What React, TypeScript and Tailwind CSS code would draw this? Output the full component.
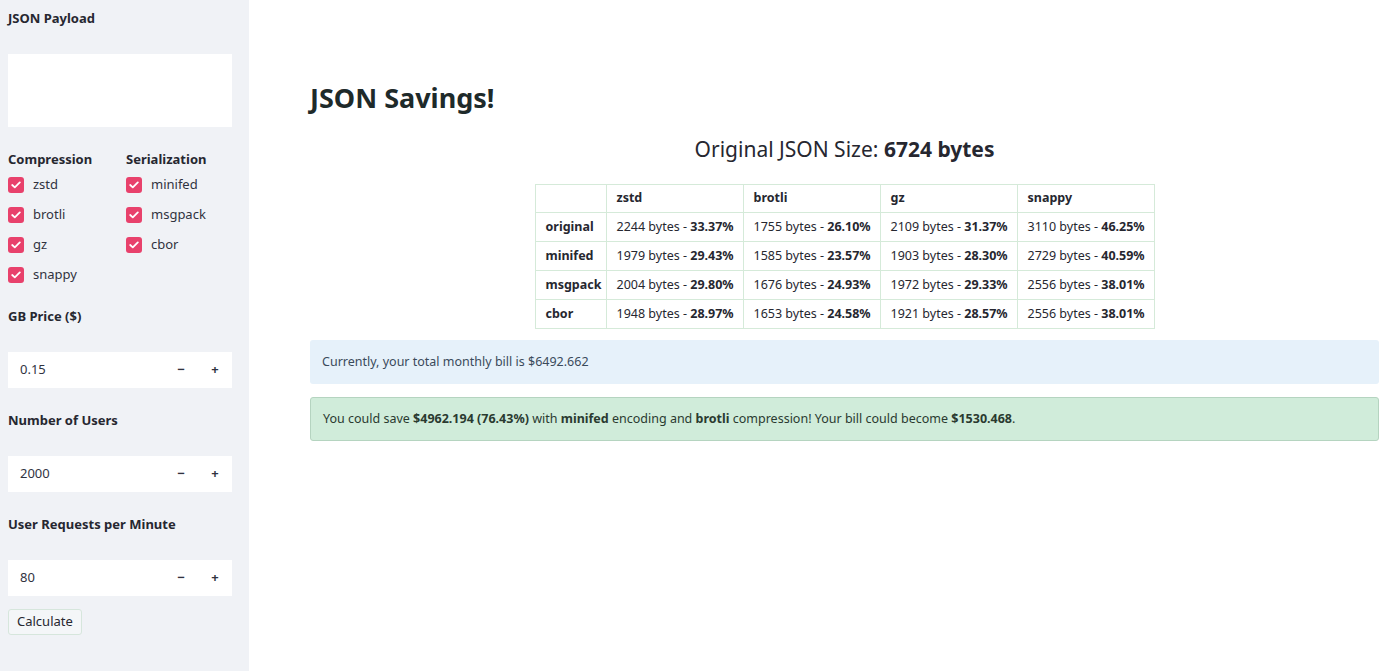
import React from "react";

const font = { fontFamily: '"Noto Sans", "Open Sans", sans-serif' };

function Check({ label }: { label: string }) {
  return (
    <div className="flex items-center h-[30px]">
      <div className="w-4 h-4 rounded-[3px] bg-[#e8416c] flex items-center justify-center mr-[9px]">
        <svg width="10" height="8" viewBox="0 0 10 8" fill="none">
          <path d="M1.2 4 L3.8 6.4 L8.8 1.4" stroke="white" strokeWidth="1.8" strokeLinecap="round" strokeLinejoin="round" />
        </svg>
      </div>
      <span className="text-[13px] text-[#31333f]">{label}</span>
    </div>
  );
}

function NumInput({ value }: { value: string }) {
  return (
    <div className="ml-2 w-[224px] h-9 bg-white flex items-center text-[13px] text-[#31333f]">
      <span className="pl-3 flex-1">{value}</span>
      <span className="w-[34px] text-center font-bold">−</span>
      <span className="w-[34px] text-center font-bold">+</span>
    </div>
  );
}

const rows: [string, string[][]][] = [
  ["original", [["2244", "33.37%"], ["1755", "26.10%"], ["2109", "31.37%"], ["3110", "46.25%"]]],
  ["minifed", [["1979", "29.43%"], ["1585", "23.57%"], ["1903", "28.30%"], ["2729", "40.59%"]]],
  ["msgpack", [["2004", "29.80%"], ["1676", "24.93%"], ["1972", "29.33%"], ["2556", "38.01%"]]],
  ["cbor", [["1948", "28.97%"], ["1653", "24.58%"], ["1921", "28.57%"], ["2556", "38.01%"]]],
];

export default function App() {
  return (
    <div className="flex w-[1400px] h-[671px] bg-white text-[#262730]" style={font}>
      <aside className="w-[249px] shrink-0 bg-[#f0f2f6] flex flex-col">
        <div className="px-2 pt-[8px] text-[13px] font-bold h-[20px] leading-[20px] mt-[0px]">JSON Payload</div>
        <div className="ml-2 w-[224px] mt-[34px] h-[73px] bg-white" />
        <div className="flex px-2 mt-[22px]">
          <div className="w-[118px]">
            <div className="text-[13px] font-bold h-[20px] leading-[20px] mb-[1px]">Compression</div>
            <Check label="zstd" />
            <Check label="brotli" />
            <Check label="gz" />
            <Check label="snappy" />
          </div>
          <div>
            <div className="text-[13px] font-bold h-[20px] leading-[20px] mb-[1px]">Serialization</div>
            <Check label="minifed" />
            <Check label="msgpack" />
            <Check label="cbor" />
          </div>
        </div>
        <div className="px-2 mt-[16px] text-[13px] font-bold h-[20px] leading-[20px]">GB Price ($)</div>
        <div className="mt-[26px]"><NumInput value="0.15" /></div>
        <div className="px-2 mt-[22px] text-[13px] font-bold h-[20px] leading-[20px]">Number of Users</div>
        <div className="mt-[26px]"><NumInput value="2000" /></div>
        <div className="px-2 mt-[22px] text-[13px] font-bold h-[20px] leading-[20px]">User Requests per Minute</div>
        <div className="mt-[26px]"><NumInput value="80" /></div>
        <div className="px-2 mt-[12px]">
          <button className="h-[26px] px-2 text-[13px] bg-[#f4f6f8] border border-[#d6e6dc] rounded-[3px] text-[#262730]">Calculate</button>
        </div>
      </aside>
      <main className="flex-1 pl-[61px] pr-[21px] pt-[80px]">
        <h1 className="text-[27px] font-bold leading-[36px] text-[#1e2a2a]">JSON Savings!</h1>
        <div className="text-center text-[21px] mt-[18px] leading-[30px] text-[#262730]">
          Original JSON Size: <b>6724 bytes</b>
        </div>
        <div className="flex justify-center mt-[20px]">
          <table className="border-collapse text-[12.5px] text-[#262730]">
            <thead>
              <tr className="h-[28px]">
                <th className="border border-[#d5ead9] w-[71px]"></th>
                {["zstd", "brotli", "gz", "snappy"].map((h) => (
                  <th key={h} className="border border-[#d5ead9] w-[137px] text-left pl-[10px] font-bold">{h}</th>
                ))}
              </tr>
            </thead>
            <tbody>
              {rows.map(([name, cells]) => (
                <tr key={name} className="h-[29px]">
                  <td className="border border-[#d5ead9] pl-[10px] font-bold">{name}</td>
                  {cells.map(([b, p], i) => (
                    <td key={i} className="border border-[#d5ead9] pl-[10px] whitespace-nowrap">
                      {b} bytes - <b>{p}</b>
                    </td>
                  ))}
                </tr>
              ))}
            </tbody>
          </table>
        </div>
        <div className="mt-[11px] h-[44px] bg-[#e6f1fa] rounded-[3px] flex items-center px-[12px] text-[12.5px] text-[#3a4a5a]">
          Currently, your total monthly bill is $6492.662
        </div>
        <div className="mt-[13px] h-[44px] bg-[#d0ecda] border border-[#b5d4c0] rounded-[3px] flex items-center px-[12px] text-[12.5px] text-[#2a3a30]">
          <span>
            You could save <b>$4962.194 (76.43%)</b> with <b>minifed</b> encoding and <b>brotli</b> compression! Your bill could become <b>$1530.468</b>.
          </span>
        </div>
      </main>
    </div>
  );
}
